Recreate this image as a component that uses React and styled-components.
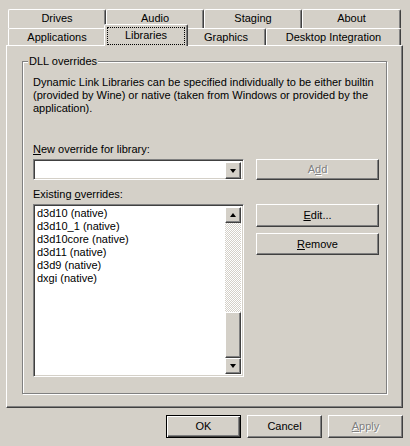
import React from 'react'
import styled, { createGlobalStyle, css } from 'styled-components'

const GlobalStyle = createGlobalStyle`
    html, body {
        margin: 0;
        padding: 0;
        background: #d4d0c8;
    }
    body {
        font-family: "Liberation Sans", Arial, sans-serif;
        font-size: 11px;
        color: #000;
    }
    * { box-sizing: border-box; }
`

const Window = styled.div`
    width: 410px;
    height: 446px;
    background: #d4d0c8;
    display: flex;
    flex-direction: column;
    padding-top: 9px;
`

const TabStrip = styled.div`
    margin-left: 8px;
    display: flex;
    flex-direction: column;
`

const TabRow = styled.div`
    display: flex;
    align-items: flex-end;
    height: ${p => p.$h}px;
`

const Tab = styled.div`
    width: ${p => p.$w}px;
    height: ${p => p.$back ? 19 : 17}px;
    border: 1px solid;
    border-color: #fff #404040 transparent #fff;
    border-bottom: none;
    border-radius: 2px 2px 0 0;
    box-shadow: inset -1px 0 #808080;
    background: #d4d0c8;
    display: flex;
    align-items: flex-start;
    justify-content: center;
    padding-top: 2px;
    line-height: 13px;
    white-space: nowrap;
    ${p => p.$active && css`
        position: relative;
        z-index: 1;
        width: ${p.$w + 4}px;
        height: 22px;
        margin: 0 -2px -1px;
        padding-top: 2px;
    `}
`

const FocusLabel = styled.span`
    display: block;
    width: 78px;
    height: 18px;
    border: 1px dotted #000;
    text-align: center;
    line-height: 15px;
`

const Panel = styled.div`
    margin-left: 6px;
    width: 397px;
    height: 363px;
    border: 1px solid;
    border-color: #fff #404040 #404040 #fff;
    box-shadow: inset -1px -1px #808080;
    padding: 15px 15px 13px 15px;
`

const GroupBox = styled.div`
    position: relative;
    height: 100%;
    border: 1px solid #808080;
    box-shadow: inset 1px 1px #fff, 1px 1px #fff;
    padding: 14px 7px 0 10px;
`

const Legend = styled.span`
    position: absolute;
    top: -7px;
    left: 5px;
    padding: 0 1px;
    background: #d4d0c8;
    line-height: 13px;
`

const Description = styled.p`
    margin: 0;
    line-height: 13px;
    white-space: nowrap;
`

const Form = styled.div`
    display: flex;
    flex-direction: column;
    margin-top: 28px;
`

const FieldLabel = styled.div`
    line-height: 13px;
    margin-bottom: 3px;
    margin-top: ${p => p.$top || 0}px;
`

const Row = styled.div`
    display: flex;
    align-items: flex-start;
    gap: 12px;
`

const sunken = css`
    border: 1px solid;
    border-color: #808080 #fff #fff #808080;
    box-shadow: inset 1px 1px #404040, inset -1px -1px #d4d0c8;
    background: #fff;
    padding: 2px;
`

const ComboBox = styled.div`
    ${sunken}
    width: 211px;
    height: 21px;
    display: flex;
    justify-content: flex-end;
`

const ListBox = styled.div`
    ${sunken}
    width: 211px;
    height: 173px;
    display: flex;
`

const Items = styled.ul`
    flex: 1;
    list-style: none;
    margin: 0;
    padding: 0 0 0 1px;
`

const Item = styled.li`
    line-height: 13px;
    white-space: nowrap;
`

const raised = css`
    border: 1px solid;
    border-color: #fff #404040 #404040 #fff;
    box-shadow: inset -1px -1px #808080;
    background: #d4d0c8;
`

const ArrowButton = styled.div`
    ${raised}
    width: 16px;
    height: ${p => p.$h || 16}px;
    display: flex;
    align-items: center;
    justify-content: center;
    flex-shrink: 0;
`

const Arrow = styled.span`
    width: 0;
    height: 0;
    border-left: 3.5px solid transparent;
    border-right: 3.5px solid transparent;
    ${p => p.$up
        ? css`border-bottom: 4px solid #000;`
        : css`border-top: 4px solid #000;`}
`

const ScrollBar = styled.div`
    width: 16px;
    display: flex;
    flex-direction: column;
`

const Track = styled.div`
    flex: 1;
    background-color: #fff;
    background-image: repeating-conic-gradient(#d4d0c8 0 25%, #fff 0 50%);
    background-size: 2px 2px;
`

const Thumb = styled.div`
    ${raised}
    height: 46px;
`

const Button = styled.button`
    ${raised}
    font: inherit;
    color: #000;
    width: ${p => p.$w || 75}px;
    height: ${p => p.$h || 23}px;
    padding: 0;
    line-height: 13px;
    flex-shrink: 0;
    ${p => p.disabled && css`
        color: #808080;
        text-shadow: 1px 1px #fff;
    `}
    ${p => p.$default && css`
        border-color: #000;
        box-shadow: inset 1px 1px #fff, inset -1px -1px #404040, inset -2px -2px #808080;
    `}
`

const SideButtons = styled.div`
    display: flex;
    flex-direction: column;
    gap: 6px;
`

const Footer = styled.div`
    display: flex;
    justify-content: flex-end;
    gap: 6px;
    padding: 7px 7px 0 0;
`

const backTabs = [
    { label: 'Drives', w: 98 },
    { label: 'Audio', w: 98 },
    { label: 'Staging', w: 98 },
    { label: 'About', w: 99 },
]

const frontTabs = [
    { label: 'Applications', w: 98 },
    { label: 'Libraries', w: 80, active: true },
    { label: 'Graphics', w: 80 },
    { label: 'Desktop Integration', w: 135 },
]

const overrides = [
    'd3d10 (native)',
    'd3d10_1 (native)',
    'd3d10core (native)',
    'd3d11 (native)',
    'd3d9 (native)',
    'dxgi (native)',
]

export default function App() {
    return (
        <Window>
            <GlobalStyle />
            <TabStrip>
                <TabRow $h={19}>
                    {backTabs.map(t => (
                        <Tab key={t.label} $w={t.w} $back>{t.label}</Tab>
                    ))}
                </TabRow>
                <TabRow $h={17}>
                    {frontTabs.map(t => (
                        <Tab key={t.label} $w={t.w} $active={t.active}>
                            {t.active ? <FocusLabel>{t.label}</FocusLabel> : t.label}
                        </Tab>
                    ))}
                </TabRow>
            </TabStrip>
            <Panel>
                <GroupBox>
                    <Legend>DLL overrides</Legend>
                    <Description>
                        Dynamic Link Libraries can be specified individually to be either builtin<br />
                        (provided by Wine) or native (taken from Windows or provided by the<br />
                        application).
                    </Description>
                    <Form>
                        <FieldLabel><u>N</u>ew override for library:</FieldLabel>
                        <Row>
                            <ComboBox>
                                <ArrowButton $h={17}><Arrow /></ArrowButton>
                            </ComboBox>
                            <Button $w={123} $h={21} disabled>A<u>d</u>d</Button>
                        </Row>
                        <FieldLabel $top={8}>Existing <u>o</u>verrides:</FieldLabel>
                        <Row>
                            <ListBox>
                                <Items>
                                    {overrides.map(o => <Item key={o}>{o}</Item>)}
                                </Items>
                                <ScrollBar>
                                    <ArrowButton><Arrow $up /></ArrowButton>
                                    <Track />
                                    <Thumb />
                                    <ArrowButton><Arrow /></ArrowButton>
                                </ScrollBar>
                            </ListBox>
                            <SideButtons>
                                <Button $w={123}><u>E</u>dit...</Button>
                                <Button $w={123} $h={22}><u>R</u>emove</Button>
                            </SideButtons>
                        </Row>
                    </Form>
                </GroupBox>
            </Panel>
            <Footer>
                <Button $default>OK</Button>
                <Button>Cancel</Button>
                <Button disabled><u>A</u>pply</Button>
            </Footer>
        </Window>
    )
}
